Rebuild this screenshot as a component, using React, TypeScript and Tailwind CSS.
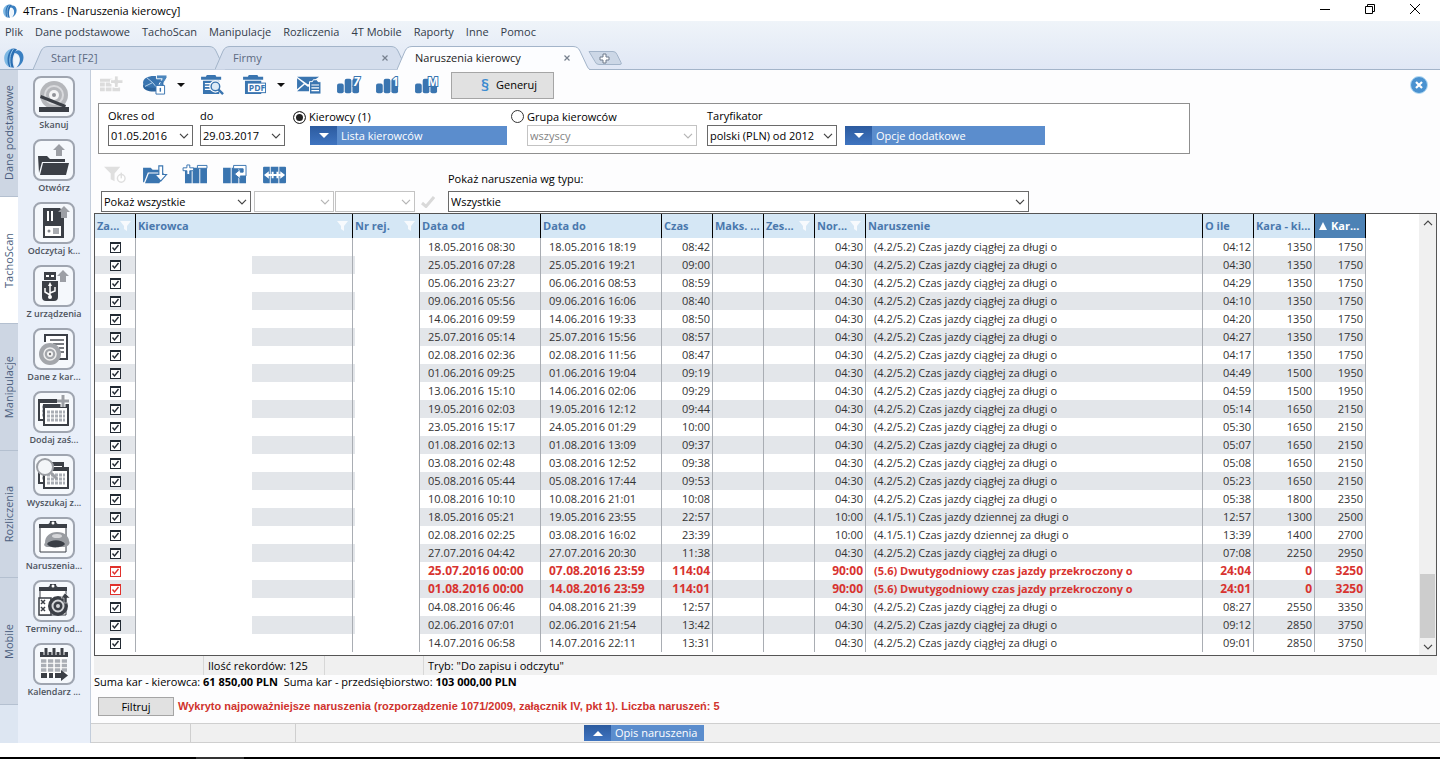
import { useState } from "react";
import type { ReactNode } from "react";

type Row = {
  from: string;
  to: string;
  time: string;
  norm: string;
  kind: number;
  over: string;
  driver: string;
  company: string;
};

const kinds = [
  "(4.2/5.2) Czas jazdy ciągłej za długi o",
  "(4.1/5.1) Czas jazdy dziennej za długi o",
  "(5.6) Dwutygodniowy czas jazdy przekroczony o",
];

const norms = ["04:30", "10:00", "90:00"];

const raw = `18.05.2016 08:30|18.05.2016 18:19|08:42|0|04:12|1350|1750
25.05.2016 07:28|25.05.2016 19:21|09:00|0|04:30|1350|1750
05.06.2016 23:27|06.06.2016 08:53|08:59|0|04:29|1350|1750
09.06.2016 05:56|09.06.2016 16:06|08:40|0|04:10|1350|1750
14.06.2016 09:59|14.06.2016 19:33|08:50|0|04:20|1350|1750
25.07.2016 05:14|25.07.2016 15:56|08:57|0|04:27|1350|1750
02.08.2016 02:36|02.08.2016 11:56|08:47|0|04:17|1350|1750
01.06.2016 09:25|01.06.2016 19:04|09:19|0|04:49|1500|1950
13.06.2016 15:10|14.06.2016 02:06|09:29|0|04:59|1500|1950
19.05.2016 02:03|19.05.2016 12:12|09:44|0|05:14|1650|2150
23.05.2016 15:17|24.05.2016 01:29|10:00|0|05:30|1650|2150
01.08.2016 02:13|01.08.2016 13:09|09:37|0|05:07|1650|2150
03.08.2016 02:48|03.08.2016 12:52|09:38|0|05:08|1650|2150
05.08.2016 05:44|05.08.2016 17:44|09:53|0|05:23|1650|2150
10.08.2016 10:10|10.08.2016 21:01|10:08|0|05:38|1800|2350
18.05.2016 05:21|19.05.2016 23:55|22:57|1|12:57|1300|2500
02.08.2016 02:25|03.08.2016 16:02|23:39|1|13:39|1400|2700
27.07.2016 04:42|27.07.2016 20:30|11:38|0|07:08|2250|2950
25.07.2016 00:00|07.08.2016 23:59|114:04|2|24:04|0|3250
01.08.2016 00:00|14.08.2016 23:59|114:01|2|24:01|0|3250
04.08.2016 06:46|04.08.2016 21:39|12:57|0|08:27|2550|3350
02.06.2016 07:01|02.06.2016 21:54|13:42|0|09:12|2850|3750
14.07.2016 06:58|14.07.2016 22:11|13:31|0|09:01|2850|3750`;

const rows: Row[] = raw.split("\n").map((line) => {
  const [from, to, time, kind, over, driver, company] = line.split("|");
  return { from, to, time, norm: norms[+kind], kind: +kind, over, driver, company };
});

const Logo = ({ className }: { className: string }) => (
  <svg viewBox="0 0 20 20" className={className}>
    <path d="M8 .6C2.500 2 0 6.500.2 11c.2 3.500 2 6.400 4.600 8C3 13 3.800 5.500 8.500.6Z" fill="#7db8e4" />
    <path d="M7 1.500C3 6.500 2.600 13.500 5 19l5 .8C7.500 13.500 8.500 6.500 13 1.300 10.500.3 8.500.3 7 1.500Z" fill="#2a6fb3" />
    <path d="M9.500 1C5.500 6 5 13 7 19.500" fill="none" stroke="#a9d2f0" strokeWidth=".9" />
    <path
      d="M10 5C12.500.5 17.500 2 19 6.500c1.600 4.500-.8 10.500-6.500 12.900 2.500-2.400 3.800-6 3.200-9.400C15.200 6.800 13 4.500 10 5Z"
      fill="#3a80c2"
    />
    <path d="M11.500 6.500c2.200.2 3.600 1.700 3.900 4 .4 3-.9 6-3.100 8.600l-1.300.5C9.500 14.500 9.500 10 11.500 6.500Z" fill="#eef5fb" />
  </svg>
);

const Chevron = ({ className = "" }: { className?: string }) => (
  <svg viewBox="0 0 10 6" className={`h-[6px] w-[10px] ${className}`} fill="none" stroke="currentColor" strokeWidth="1.2">
    <path d="M1 .8 5 4.800 9 .8" />
  </svg>
);

const Select = ({
  id,
  label,
  value,
  className = "",
  disabled = false,
}: {
  id: string;
  label?: string;
  value: string;
  className?: string;
  disabled?: boolean;
}) => (
  <div className={`relative ${className}`}>
    <select
      id={id}
      aria-label={label}
      disabled={disabled}
      className={`block h-[21px] w-full appearance-none truncate border bg-white pl-[2px] pr-4 ${
        disabled ? "border-[#c3c3c3] text-[#838383]" : "border-[#6a6a6a] text-black"
      }`}
    >
      <option>{value}</option>
    </select>
    <Chevron
      className={`pointer-events-none absolute right-1 top-2 ${disabled ? "text-[#b5b5b5]" : "text-[#444]"}`}
    />
  </div>
);

const DropButton = ({ children, className = "", up = false }: { children: ReactNode; className?: string; up?: boolean }) => (
  <button className={`flex items-center bg-[#5b8dcd] text-left text-white ${className}`}>
    <span className="flex h-full w-[27px] items-center justify-center bg-linear-to-b from-[#2c5b9f] to-[#3f74c0]">
      <svg viewBox="0 0 10 5" className="h-[5px] w-[10px]" fill="#fff">
        <path d={up ? "M0 5 5 0l5 5Z" : "M0 0h10L5 5Z"} />
      </svg>
    </span>
    <span className="px-1">{children}</span>
  </button>
);

// toolbar icons

const Bars = ({ mark }: { mark: string }) => (
  <>
    <rect x="0" y="9" width="7" height="10" rx="2" />
    <rect x="8" y="4" width="7" height="15" rx="2" />
    <rect x="16" y="4" width="7" height="15" rx="2" />
    <text
      x={mark === "M" ? 13 : 17}
      y="12"
      fontSize="12"
      fontWeight="700"
      fontStyle={mark === "7" ? "italic" : "normal"}
      fill="#fff"
      stroke="#3a75b0"
      strokeWidth="2"
      paintOrder="stroke"
    >
      {mark}
    </text>
  </>
);

const icons: Record<string, ReactNode> = {
  add: (
    <g fill="#dcdcdc">
      <path d="M1 4h13v3H1zM1 8h5v4H1zM7 8h6v4H7zM1 13h5v4H1zM7 13h6v4H7zM14 13h8v4h-8z" />
      <path d="M16 1h4v4h5v4h-5v4h-4V9h-4V5h4z" stroke="#fff" />
    </g>
  ),
  pie: (
    <>
      <path d="M0 8c0-9 21-9 21-1v4c0 9-21 7-21-3Z" />
      <path d="M0 9c1 6 20 6 21 0v3c-1 7-20 7-21 0Z" fill="#2b639c" />
      <path d="M10 8 4 3M10 8 2 12M10 8l5 6" stroke="#bcd6ec" />
      <path d="M14 0h11v3l-5 8h-4l4-7h-6z" fill="#4c86bd" stroke="#fff" />
      <path d="M13.500 11h9v9h-9z" fill="#fff" stroke="#3a75b0" />
      <path d="M15.500 11V9a2.500 2.500 0 0 1 5 0v2" fill="none" stroke="#3a75b0" strokeWidth="1.500" />
      <path d="M17.300 13.500h1.500v4h-1.500z" />
    </>
  ),
  search: (
    <>
      <path d="M0 2h5l1-2h9l1 2h5v3H0zM2 6h17v14H2z" />
      <path d="M4 9h8M4 12h6M4 15h6" stroke="#fff" strokeWidth="1.300" />
      <circle cx="15" cy="12" r="4.500" fill="#dceaf6" stroke="#fff" strokeWidth="4" />
      <circle cx="15" cy="12" r="4.500" fill="#dceaf6" stroke="#3a75b0" strokeWidth="1.500" />
      <path d="m18 15 5 5" stroke="#3a75b0" strokeWidth="2.500" />
    </>
  ),
  pdf: (
    <>
      <path d="M0 2h5l1-2h9l1 2h5v3H0zM2 6h17v14H2z" />
      <rect x="4.500" y="8.500" width="19" height="10" fill="#fff" stroke="#3a75b0" />
      <text x="6" y="17" fontSize="9" fontWeight="700">PDF</text>
    </>
  ),
  mail: (
    <>
      <path d="M0 2h23l-11.500 8zM0 3.500 7 9l-7 6zM0 17l8-7 3.500 2.500L15 10l8 7z" />
      <path d="M13 7h3l1-2h4l1 2h3v13H13z" stroke="#fff" />
      <path d="M15 10.500h8M15 13.500h8M15 16.500h8" stroke="#fff" strokeWidth="1.300" />
    </>
  ),
  bars7: <Bars mark="7" />,
  bars1: <Bars mark="1" />,
  barsM: <Bars mark="M" />,
  filterOff: (
    <g fill="#dfdfdf">
      <path d="M1 2h17l-6 7v8l-4-2V9z" />
      <circle cx="19" cy="14" r="4" fill="#fff" stroke="#dfdfdf" strokeWidth="1.500" />
      <path d="M18.300 8h1.500v6h-1.500z" />
    </g>
  ),
  folder: (
    <>
      <path d="M0 3h8l2 2h8v3H5L1 18H0z" />
      <path d="M6 9h16l-5 10H2z" />
      <path d="M16.500 1h4v9h4L18.500 17 12.500 10h4z" fill="#fff" stroke="#3a75b0" strokeWidth="1.200" />
    </>
  ),
  columnAdd: (
    <>
      <path d="M2 6h7v13H2zM10 3h7v16h-7zM18 3h7v16h-7z" />
      <path d="M15 .500h10v3H15z" fill="#fff" stroke="#3a75b0" />
      <path d="M4 0h3v3h4v3H7v4H4V6H0V3h4z" fill="#fff" stroke="#3a75b0" />
    </>
  ),
  columnBack: (
    <>
      <path d="M0 3h8v16H0zM9 3h7v16H9zM17 3h7v16h-7z" />
      <path d="M11 .500h13v11h-6v3l-6-5 6-5v3h3V4H11z" fill="#fff" stroke="#3a75b0" />
    </>
  ),
  columnFit: (
    <>
      <path d="M0 3q0-1 1-1h6v17H1q-1 0-1-1zM8 2h8v17H8zM17 2h6q1 0 1 1v15q0 1-1 1h-6z" />
      <path d="m1 10.500 5-4v3h3V7h2v2.500h3V7h2v2.500h2v-3l5 4-5 4v-3h-2V14h-2v-2.500h-3V14H9v-2.500H6v3z" fill="#fff" />
    </>
  ),
};

const ToolIcon = ({ name, title }: { name: string; title: string }) => (
  <button aria-label={title} className="flex h-6 w-[28px] shrink-0 items-center justify-center">
    <svg viewBox="-1 -1 28 23" className="h-[22px] w-[27px] overflow-visible font-['Open_Sans',sans-serif]" fill="#3a75b0">
      {icons[name]}
    </svg>
  </button>
);

const Caret = () => (
  <svg viewBox="0 0 8 4" className="h-1 w-2 shrink-0" fill="#111">
    <path d="M0 0h8L4 4Z" />
  </svg>
);

// sidebar drawings

const CalendarGrid = ({ x, y }: { x: number; y: number }) => (
  <g transform={`translate(${x} ${y})`}>
    <path d="M0 0h24v20H0z" fill="#fff" stroke="#3b3f46" strokeWidth="2" />
    <path d="M-1-1h26v4H-1z" fill="#3b3f46" />
    <path d="M3 7h18M3 11h18M3 15h18" stroke="#aaaeb5" strokeWidth="2.800" strokeDasharray="3 1" />
  </g>
);

const Clipboard = () => (
  <>
    <path d="M7 9h26v26H7z" fill="#fff" stroke="#3b3f46" />
    <path d="M6 7h9c1 0 2-1 2-3h6c0 2 1 3 2 3h9v4H6z" fill="#3b3f46" />
    <circle cx="20" cy="6" r="1.500" fill="#fff" />
  </>
);

const UpArrow = ({ x, y }: { x: number; y: number }) => (
  <path d="M6 0l6 6H9v6H3V6H0z" fill="#9c9fa5" transform={`translate(${x} ${y})`} />
);

const sideItems: { label: string; art: ReactNode }[] = [
  {
    label: "Skanuj",
    art: (
      <>
        <circle cx="21" cy="19" r="14" fill="#b5b7bb" />
        <circle cx="21" cy="19" r="9" fill="none" stroke="#d9dadd" strokeWidth="2" />
        <circle cx="21" cy="19" r="5" fill="#f4f4f5" />
        <circle cx="21" cy="19" r="2" fill="#909298" />
        <path d="M6 31h30v5H6z" fill="#3b3f46" />
        <path d="M8 19 33 29l-1 3L7 22z" fill="#3b3f46" />
      </>
    ),
  },
  {
    label: "Otwórz",
    art: (
      <>
        <UpArrow x={20} y={5} />
        <path d="M5 17h9l3 3h15v3H9L6 34z" fill="#3b3f46" />
        <path d="M10 24h26l-3 12H7z" fill="#3b3f46" />
      </>
    ),
  },
  {
    label: "Odczytaj k...",
    art: (
      <>
        <path d="M10 6h17l4 5v25H10z" fill="#3b3f46" />
        <path d="M14 9h2v10h-2zM18 9h2v10h-2z" fill="#fff" />
        <rect x="12" y="24" width="16" height="10" fill="#fff" />
        <circle cx="16" cy="29" r="1.500" fill="#85888e" />
        <path d="M20 26h6v6h-6z" fill="#a8abb0" />
        <UpArrow x={25} y={4} />
      </>
    ),
  },
  {
    label: "Z urządzenia",
    art: (
      <>
        <path d="M11 7h12v8H11zM9 16h16v16q0 4-4 4h-8q-4 0-4-4z" fill="#3b3f46" />
        <path d="M13 10h3v2h-3zM18 10h3v2h-3z" fill="#fff" />
        <path d="M17 20v13M17 30l-5-3v-4M17 28l5-2v-4" stroke="#fff" strokeWidth="1.500" fill="none" />
        <circle cx="17" cy="32" r="2" fill="#fff" />
        <path d="m17 17 2 4h-4z" fill="#fff" />
        <UpArrow x={24} y={5} />
      </>
    ),
  },
  {
    label: "Dane z kar...",
    art: (
      <>
        <path d="M12 14V7h22v24h-8" fill="#fff" stroke="#3b3f46" strokeWidth="2" />
        <path d="M17 12h14M20 16h11M26 20h5M27 24h4" stroke="#4d5158" strokeWidth="1.500" />
        <circle cx="17" cy="26" r="11" fill="#a3a6ab" />
        <circle cx="17" cy="26" r="6" fill="none" stroke="#eee" strokeWidth="1.500" />
        <circle cx="17" cy="26" r="3" fill="#f5f5f5" />
        <circle cx="17" cy="26" r="1.200" fill="#777" />
      </>
    ),
  },
  {
    label: "Dodaj zaś...",
    art: (
      <>
        <CalendarGrid x={6} y={9} />
        <CalendarGrid x={11} y={14} />
        <path d="M30 4v12M24 10h12" stroke="#fff" strokeWidth="5" />
        <path d="M30 4v12M24 10h12" stroke="#9c9fa5" strokeWidth="3" />
      </>
    ),
  },
  {
    label: "Wyszukaj z...",
    art: (
      <>
        <CalendarGrid x={6} y={9} />
        <CalendarGrid x={11} y={14} />
        <circle cx="12" cy="13" r="8" fill="#f3f5f8" stroke="#9c9fa5" strokeWidth="2" />
        <path d="m18 19 6 6" stroke="#9c9fa5" strokeWidth="3" />
      </>
    ),
  },
  {
    label: "Naruszenia...",
    art: (
      <>
        <Clipboard />
        <path d="M12 26c0-7 5-11 12-11 8 0 12 5 12 9 2 3-2 6-5 6H15c-3 0-5-2-3-4Z" fill="#999ca1" />
        <path d="M14 27c3-5 15-5 18 0-3 4-15 5-18 0Z" fill="#3b3f46" />
        <ellipse cx="24" cy="19" rx="5" ry="2" fill="#d5d6d9" />
      </>
    ),
  },
  {
    label: "Terminy od...",
    art: (
      <>
        <Clipboard />
        <path d="M6 18h12v17H6z" fill="#fff" stroke="#3b3f46" strokeWidth="1.500" />
        <path d="m8 20 4 4m0-4-4 4m4 3-4 4m0-4 4 4" stroke="#3b3f46" strokeWidth="1.500" />
        <circle cx="25" cy="26" r="10" fill="#3b3f46" />
        <circle cx="25" cy="26" r="5.500" fill="none" stroke="#d3d5d8" strokeWidth="2" />
        <circle cx="25" cy="26" r="2" fill="#d3d5d8" />
        <path d="m32 13 5 5h-3v5h-3v-5h-3z" fill="#3b3f46" stroke="#fff" strokeWidth=".5" />
      </>
    ),
  },
  {
    label: "Kalendarz ...",
    art: (
      <>
        <path d="M8 10h26v24H8z" fill="#fff" />
        <path d="M7 9h28v5H7z" fill="#3b3f46" />
        <path d="M13 5v7M21 5v7M29 5v7" stroke="#fff" strokeWidth="5" />
        <path d="M13 5v7M21 5v7M29 5v7" stroke="#3b3f46" strokeWidth="3" />
        <path d="M8 18h26M8 22.500h26M8 27h26" stroke="#aaaeb5" strokeWidth="3.500" strokeDasharray="5.400 1.500" />
        <path d="M8 30h6v5H8zM16 30h4v5h-4zM22 30h6v-3l7 5.500-7 5.500v-3h-6z" fill="#3b3f46" />
      </>
    ),
  },
];

const menu = ["Plik", "Dane podstawowe", "TachoScan", "Manipulacje", "Rozliczenia", "4T Mobile", "Raporty", "Inne", "Pomoc"];
const sections = ["Dane podstawowe", "TachoScan", "Manipulacje", "Rozliczenia", "Mobile"];

const tabs = [
  { name: "Start [F2]", closable: false },
  { name: "Firmy", closable: true },
  { name: "Naruszenia kierowcy", closable: true },
];

const columns = [
  { name: "Za...", width: "w-[41px]", filter: true },
  { name: "Kierowca", width: "w-[217px]", filter: true },
  { name: "Nr rej.", width: "w-[67px]", filter: true },
  { name: "Data od", width: "w-[121px]" },
  { name: "Data do", width: "w-[121px]" },
  { name: "Czas", width: "w-[51px]" },
  { name: "Maks. ...", width: "w-[51px]" },
  { name: "Zes...", width: "w-[51px]", filter: true },
  { name: "Nor...", width: "w-[51px]", filter: true },
  { name: "Naruszenie", width: "w-auto" },
  { name: "O ile", width: "w-[51px]" },
  { name: "Kara - ki...", width: "w-[61px]" },
  { name: "Kar...", width: "w-[51px]", sorted: true },
];

const Tab = ({ name, closable, active }: { name: string; closable: boolean; active: boolean }) => (
  <div className={`relative -mr-[11px] flex h-6 w-[193px] items-center px-[18px] ${active ? "z-10" : ""}`}>
    <svg viewBox="0 0 193 24" className="absolute inset-0 h-6 w-[193px]" fill={active ? "#fcfdff" : "#d5deed"} stroke="#a3b4c9">
      <path d="M0 23.500 8 5Q10 .5 15 .5H176Q181 .5 183 5L190 20Q191.500 23.500 193 23.500" />
      {active && <path d="M1 23.500H192" stroke="#fcfdff" />}
    </svg>
    <a href="#" className={`relative grow ${active ? "text-[#222]" : "text-[#5c6a82]"}`}>
      {name}
    </a>
    {closable && (
      <button aria-label={`Zamknij ${name}`} className="relative mr-[2px] text-[#77808e]">
        <svg viewBox="0 0 6 6" className="h-[6px] w-[6px]" stroke="currentColor" strokeWidth="1.200">
          <path d="m.5.5 5 5m0-5-5 5" />
        </svg>
      </button>
    )}
  </div>
);

const Check = ({ red, label }: { red: boolean; label: string }) => {
  const [on, setOn] = useState(true);
  return (
    <span className={`relative mx-auto block h-[11px] w-[11px] ${red ? "text-[#e0312c]" : "text-[#222a33]"}`}>
      <input
        type="checkbox"
        aria-label={label}
        checked={on}
        onChange={() => setOn(!on)}
        className="block h-[11px] w-[11px] appearance-none border border-t-2 border-current bg-white"
      />
      {on && (
        <svg viewBox="0 0 11 11" className="pointer-events-none absolute inset-0" fill="none" stroke="currentColor" strokeWidth="1.400">
          <path d="m2.500 5.500 2 2.500 4-5" />
        </svg>
      )}
    </span>
  );
};

const ViolationTable = () => (
  <div className="mr-[3px] flex grow border border-[#555] bg-white">
    <div className="min-w-0 grow pr-[53px]">
      <table className="w-full table-fixed border-separate border-spacing-0 text-[11px] leading-4 text-[#333]">
        <thead>
          <tr>
            {columns.map((c) => (
              <th
                key={c.name}
                className={`${c.width} h-6 overflow-hidden whitespace-nowrap border-r border-black p-0 pl-[2px] text-left font-bold ${
                  c.sorted ? "bg-[#4d82b5] text-white" : "bg-[#d5e7f5] text-[#4a78ad]"
                }`}
              >
                <span className="flex items-center">
                  {c.sorted && (
                    <svg viewBox="0 0 8 8" className="ml-[2px] mr-1 h-2 w-2 shrink-0" fill="#fff">
                      <path d="M4 0l4 8H0z" />
                    </svg>
                  )}
                  <span className="grow">{c.name}</span>
                  {c.filter && (
                    <svg viewBox="0 0 11 10" className="mr-1 h-[10px] w-[11px] shrink-0" fill="#f7fafd">
                      <path d="M0 0h11L7 5v5L4 8V5z" />
                    </svg>
                  )}
                </span>
              </th>
            ))}
          </tr>
        </thead>
        <tbody>
          {rows.map((r, i) => {
            const red = r.kind === 2;
            const cell = "h-[18px] whitespace-nowrap border-r border-[#a9adb3] p-0";
            return (
              <tr
                key={r.from}
                className={`${i % 2 ? "bg-[#e3e6ea]" : "bg-white"} ${red ? "text-[12px] font-bold text-[#d8332f]" : ""}`}
              >
                <td className={cell}>
                  <Check red={red} label={r.from} />
                </td>
                <td className={cell}>
                  <div className="h-[18px] w-[116px] bg-white" />
                </td>
                <td className={`${cell} pl-[2px]`}>
                  <div className="h-[18px] bg-white" />
                </td>
                <td className={`${cell} pl-2`}>{r.from}</td>
                <td className={`${cell} pl-2`}>{r.to}</td>
                <td className={`${cell} pr-[2px] text-right`}>{r.time}</td>
                <td className={cell} />
                <td className={cell} />
                <td className={`${cell} pr-[2px] text-right`}>{r.norm}</td>
                <td className={`${cell} pl-2 text-[11px]`}>{kinds[r.kind]}</td>
                <td className={`${cell} pr-[2px] text-right`}>{r.over}</td>
                <td className={`${cell} pr-[2px] text-right`}>{r.driver}</td>
                <td className={`${cell} pr-[2px] text-right`}>{r.company}</td>
              </tr>
            );
          })}
        </tbody>
      </table>
    </div>
    <div className="flex w-[17px] shrink-0 flex-col items-center justify-between bg-[#f0f0f0] pt-[6px] pb-[5px] text-[#444]">
      <Chevron className="rotate-180" />
      <div className="mt-auto mb-[6px] h-16 w-[15px] bg-[#cdcdcd]" />
      <Chevron />
    </div>
  </div>
);

const App = () => {
  const [mode, setMode] = useState("drivers");

  return (
    <div className="flex min-h-screen flex-col bg-[#fdfdfe] font-['Open_Sans','Noto_Sans',sans-serif] text-[11px] leading-4 text-black">
      <header>
        <div className="flex h-[21px] items-center bg-white pl-[3px]">
          <Logo className="h-[14px] w-[14px]" />
          <h1 className="ml-[6px] grow">4Trans - [Naruszenia kierowcy]</h1>
          <div className="mr-5 flex items-center gap-[35px] pb-1">
            <button aria-label="Minimalizuj">
              <svg viewBox="0 0 10 10" className="h-[10px] w-[10px]" stroke="#000">
                <path d="M0 5.500h10" />
              </svg>
            </button>
            <button aria-label="Przywróć">
              <svg viewBox="0 0 10 10" className="h-[10px] w-[10px]" stroke="#000" fill="none">
                <path d="M.5 2.500h7v7h-7zM2.500 2.500v-2h7v7h-2" />
              </svg>
            </button>
            <button aria-label="Zamknij">
              <svg viewBox="0 0 10 10" className="h-[10px] w-[10px]" stroke="#000">
                <path d="m0 0 10 10M10 0 0 10" />
              </svg>
            </button>
          </div>
        </div>
        <div className="bg-linear-to-b from-[#eff4f9] to-[#e0e7f5]">
          <nav className="flex h-[25px] items-center gap-3 pb-[3px] pl-[5px] text-[#333c4a]">
            {menu.map((m) => (
              <a key={m} href="#">
                {m}
              </a>
            ))}
          </nav>
          <div className="flex h-6 items-center border-b border-[#a3b4c9] pl-1">
            <Logo className="mr-[9px] h-5 w-5" />
            {tabs.map((t, i) => (
              <Tab key={t.name} {...t} active={i === 2} />
            ))}
            <button aria-label="Nowa karta" className="ml-[9px]">
              <svg viewBox="0 0 34 14" className="h-[14px] w-[34px]" stroke="#a3b4c9" fill="#ccd7e6">
                <path d="M1 .5h24q3 0 4 3l4 8q1 2-1 2H11q-3 0-4-3Z" />
                <path d="M15 3h3v3h3v3h-3v3h-3V9h-3V6h3z" fill="#fff" stroke="#6f7b8b" />
              </svg>
            </button>
          </div>
        </div>
      </header>

      <div className="flex grow">
        <nav className="flex w-[18px] shrink-0 flex-col bg-[#dde6f2]">
          {sections.map((s, i) => (
            <a
              key={s}
              href="#"
              className={`flex h-[127px] items-center justify-center border-b border-[#b4c0d0] text-[#4c5f80] ${
                i === 1 ? "bg-white" : "bg-[#cdd6e3]"
              }`}
            >
              <span className="rotate-180 [writing-mode:vertical-rl]">{s}</span>
            </a>
          ))}
        </nav>

        <aside className="w-[73px] shrink-0 border-r border-[#c3cddb] bg-[#e9eff9] pt-[6px]">
          {sideItems.map((s) => (
            <button key={s.label} className="flex h-[63px] w-full flex-col items-center text-[9px] font-semibold leading-[14px] text-[#4d535d]">
              <svg viewBox="0 0 42 42" className="h-[42px] w-[42px]">
                <rect x="1" y="1" width="40" height="40" rx="7" fill="#f5f8fc" stroke="#9fa5b0" strokeWidth="2" />
                {s.art}
              </svg>
              {s.label}
            </button>
          ))}
        </aside>

        <main className="flex min-w-0 grow flex-col">
          <div className="flex h-[33px] items-center pl-[6px] pr-3 pb-[3px]">
            <ToolIcon name="add" title="Dodaj" />
            <div className="ml-4 flex grow items-center gap-[10px]">
              <span className="flex items-center gap-2">
                <ToolIcon name="pie" title="Wykres" />
                <Caret />
              </span>
              <span className="ml-1">
                <ToolIcon name="search" title="Szukaj" />
              </span>
              <span className="ml-1 flex items-center gap-2">
                <ToolIcon name="pdf" title="Eksport PDF" />
                <Caret />
              </span>
              <ToolIcon name="mail" title="Wyślij" />
              <span className="flex gap-[11px] pl-[2px]">
                <ToolIcon name="bars7" title="Tydzień" />
                <ToolIcon name="bars1" title="Dzień" />
                <ToolIcon name="barsM" title="Miesiąc" />
              </span>
              <button className="flex h-[27px] w-[103px] items-center border border-[#a5a5a5] bg-[#e1e1e1] pl-[22px]">
                <span className="w-[22px] text-[17px] font-semibold text-[#3d8bd0]">§</span>
                Generuj
              </button>
            </div>
            <button aria-label="Zamknij widok">
              <svg viewBox="0 0 18 18" className="h-[18px] w-[18px]">
                <circle cx="9" cy="9" r="8.500" fill="#4a92d0" stroke="#b7dcf4" />
                <path d="m6 6 6 6m0-6-6 6" stroke="#fff" strokeWidth="2.200" />
              </svg>
            </button>
          </div>

          <section className="ml-[7px] flex h-[51px] w-[1092px] max-w-full items-start border border-[#8f8f8f] bg-white pl-[9px] pt-1">
            <div className="w-[85px]">
              <label htmlFor="from" className="block h-[17px]">Okres od</label>
              <Select id="from" value="01.05.2016" />
            </div>
            <div className="ml-[7px] w-[85px]">
              <label htmlFor="to" className="block h-[17px]">do</label>
              <Select id="to" value="29.03.2017" />
            </div>
            <div className="ml-2 w-[214px]">
              <label className="flex h-[18px] items-center gap-[3px]">
                <input
                  type="radio"
                  name="mode"
                  checked={mode === "drivers"}
                  onChange={() => setMode("drivers")}
                  className="h-[13px] w-[13px] appearance-none rounded-full border border-[#333] bg-white checked:bg-[#222] checked:shadow-[inset_0_0_0_2px_#fff]"
                />
                Kierowcy (1)
              </label>
              <DropButton className="ml-[17px] h-[19px] w-[197px]">Lista kierowców</DropButton>
            </div>
            <div className="ml-1 w-[186px]">
              <label className="flex h-[17px] items-center gap-[3px]">
                <input
                  type="radio"
                  name="mode"
                  checked={mode === "group"}
                  onChange={() => setMode("group")}
                  className="h-[13px] w-[13px] appearance-none rounded-full border border-[#333] bg-white checked:bg-[#222] checked:shadow-[inset_0_0_0_2px_#fff]"
                />
                Grupa kierowców
              </label>
              <Select id="group" label="Grupa" value="wszyscy" className="ml-4" disabled />
            </div>
            <div className="ml-[10px] w-[130px]">
              <label htmlFor="tariff" className="block h-[17px]">Taryfikator</label>
              <Select id="tariff" value="polski (PLN) od 2012" />
            </div>
            <DropButton className="ml-2 mt-[18px] h-[19px] w-[200px]">Opcje dodatkowe</DropButton>
          </section>

          <div className="flex pl-[10px] pt-[9px]">
            <div className="w-[347px]">
              <div className="flex h-7 items-start gap-3">
                <ToolIcon name="filterOff" title="Wyłącz filtr" />
                <ToolIcon name="folder" title="Wczytaj" />
                <ToolIcon name="columnAdd" title="Kolumny" />
                <ToolIcon name="columnBack" title="Przywróć kolumny" />
                <ToolIcon name="columnFit" title="Dopasuj" />
              </div>
              <div className="flex items-center">
                <Select id="show" label="Pokaż" value="Pokaż wszystkie" className="w-[150px]" />
                <Select id="cond" label="Warunek" value="" className="ml-[3px] w-20" disabled />
                <Select id="val" label="Wartość" value="" className="ml-[1px] w-20" disabled />
                <button aria-label="Zastosuj" className="ml-[6px]">
                  <svg viewBox="0 0 14 12" className="h-3 w-[14px]" fill="none" stroke="#d9d9d9" strokeWidth="3">
                    <path d="m1 7 4 3.500L13 1" />
                  </svg>
                </button>
              </div>
            </div>
            <div>
              <label htmlFor="type" className="block h-7 pt-2">Pokaż naruszenia wg typu:</label>
              <Select id="type" value="Wszystkie" className="w-[581px]" />
            </div>
          </div>

          <div className="flex grow flex-col pl-[3px] pt-[1px]">
            <ViolationTable />
            <div className="mr-[3px] flex h-[19px] shrink-0 items-center bg-[#f0f0f0]">
              <span className="h-full w-[110px] border-r border-[#d7d7d7]" />
              <span className="w-[120px] pl-1">Ilość rekordów: 125</span>
              <span className="h-full w-[100px] border-x border-[#d7d7d7]" />
              <span className="pl-1">Tryb: "Do zapisu i odczytu"</span>
            </div>
            <p className="h-[22px] shrink-0 leading-[14px]">
              Suma kar - kierowca: <b>61 850,00 PLN</b>&nbsp; Suma kar - przedsiębiorstwo: <b>103 000,00 PLN</b>
            </p>
            <div className="flex h-[26px] shrink-0 items-start gap-1 pl-1">
              <button className="h-[19px] w-[76px] border border-[#a5a5a5] bg-[#e1e1e1] leading-[17px]">Filtruj</button>
              <p className="font-['Liberation_Sans',sans-serif] font-bold leading-[18px] text-[#d0332d]">
                Wykryto najpoważniejsze naruszenia (rozporządzenie 1071/2009, załącznik IV, pkt 1). Liczba naruszeń: 5
              </p>
            </div>
          </div>

          <div className="flex h-5 shrink-0 items-center border-y border-[#cfcfcf] bg-[#f0f0f0]">
            <span className="h-full w-[100px] border-r border-[#cfcfcf]" />
            <span className="h-full w-[105px] border-r border-[#cfcfcf]" />
            <DropButton up className="ml-[288px] h-4 w-[120px]">Opis naruszenia</DropButton>
          </div>
        </main>
      </div>

      <footer className="flex h-4 shrink-0 flex-col justify-end bg-white">
        <div className="h-[2px] bg-black pl-[196px]">
          <div className="h-full w-12 bg-[#333]" />
        </div>
      </footer>
    </div>
  );
};

export default App;
